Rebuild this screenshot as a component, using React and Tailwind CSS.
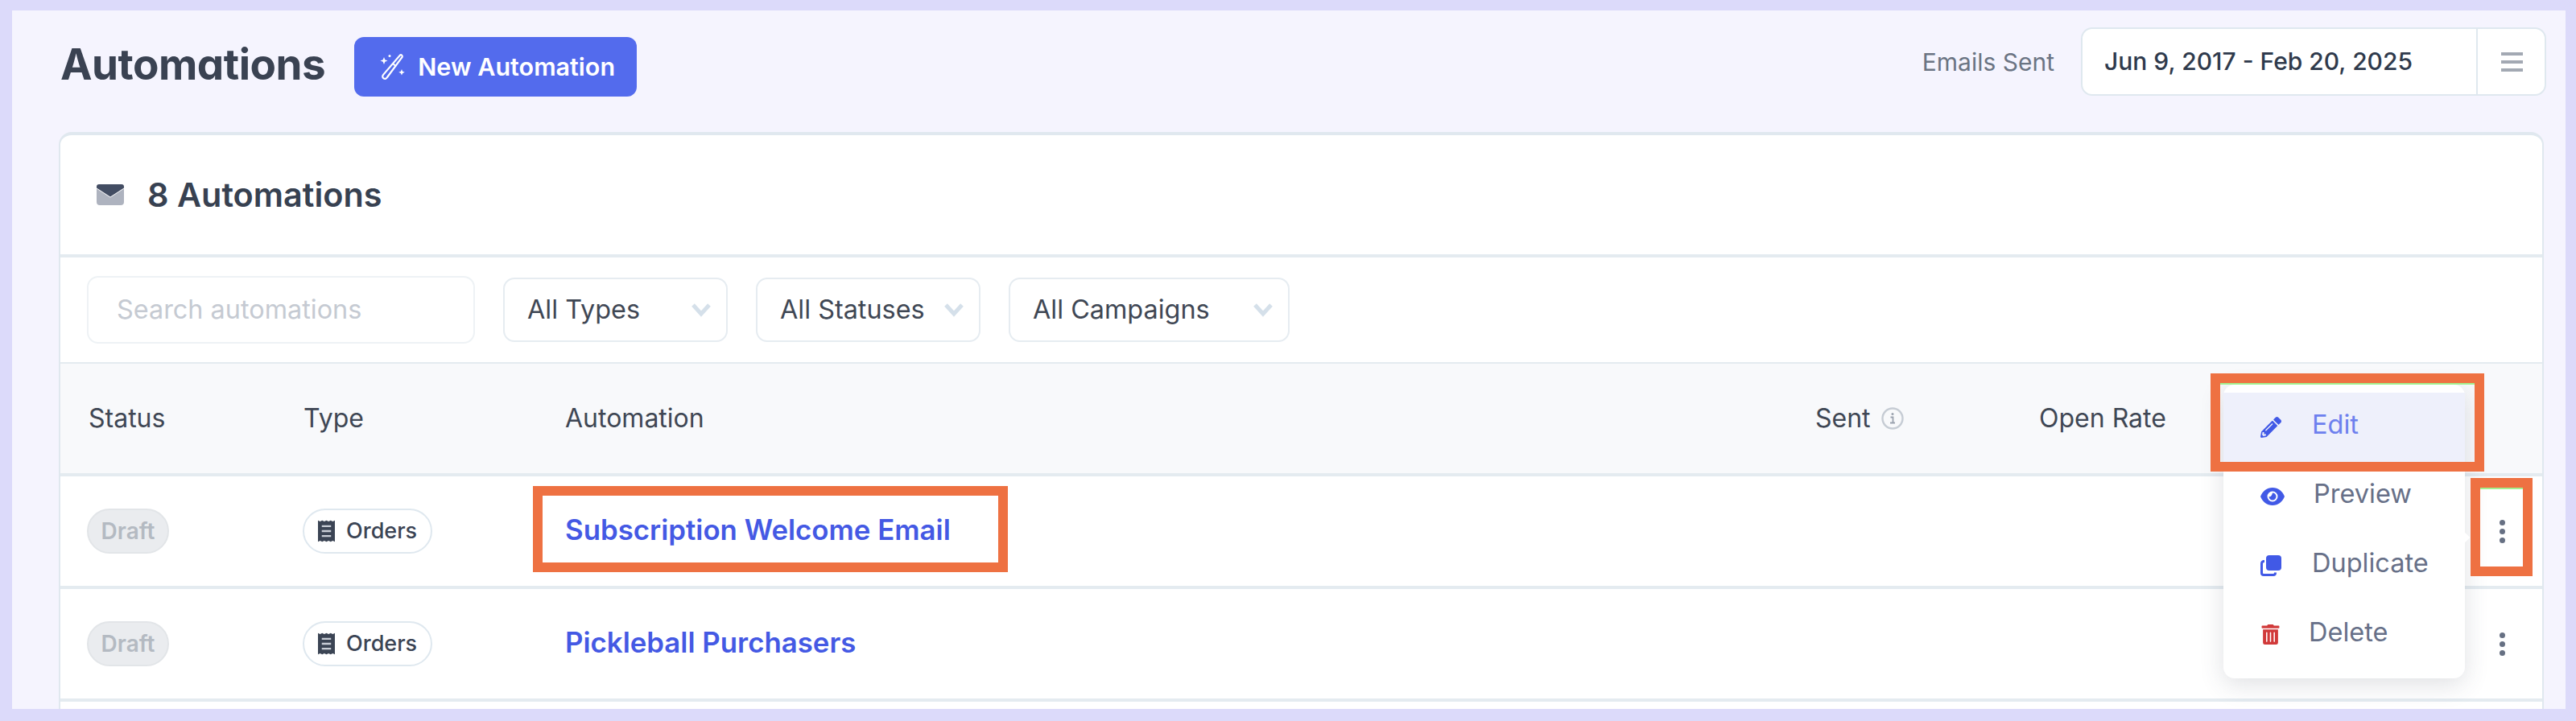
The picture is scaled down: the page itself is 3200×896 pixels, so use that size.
import React from 'react';
import { FaPencilAlt, FaTrashAlt } from 'react-icons/fa';

const WandIcon = () => (
    <svg width="34" height="34" viewBox="0 0 34 34" fill="none" className="shrink-0">
        <path d="M27 2.500c1.500-1 3.500 .8 2.600 2.400L11 30c-1.300 2-3 2.500-4.500 1.400s-1.700-2.800-.4-4.500L27 2.500z" stroke="#fff" strokeWidth="2.200" />
        <path d="M18 13l4 3.500" stroke="#fff" strokeWidth="2" />
        <path d="M7 5l1.300 3.200L11.500 9.500 8.300 10.800 7 14 5.700 10.800 2.500 9.500 5.700 8.200z" fill="#fff" />
        <path d="M29 20l1.100 2.700 2.700 1.100-2.700 1.100L29 27.600l-1.100-2.700-2.700-1.100 2.700-1.100z" fill="#fff" />
        <circle cx="14" cy="3.500" r="1.500" fill="#fff" />
    </svg>
);

const MailIcon = () => (
    <svg width="34" height="26" viewBox="0 0 34 26" className="shrink-0">
        <path d="M0 5.500l17 11 17-11V22a4 4 0 0 1-4 4H4a4 4 0 0 1-4-4z" fill="#aeb3bf" />
        <path d="M3 0h28a3 3 0 0 1 3 3v1.500L17 15.500 0 4.500V3a3 3 0 0 1 3-3z" fill="#434d63" />
    </svg>
);

const ReceiptIcon = () => (
    <svg width="21" height="28" viewBox="0 0 22 28" className="shrink-0">
        <path d="M0 0l2.750 1.500L5.500 0l2.750 1.500L11 0l2.750 1.500L16.500 0l2.750 1.500L22 0v28l-2.750-1.500L16.500 28l-2.750-1.500L11 28l-2.750-1.500L5.500 28l-2.750-1.500L0 28z" fill="#3b4454" />
        <path d="M5 7.500h12M5 14h12M5 20.500h12" stroke="#c9ced6" strokeWidth="2.400" />
    </svg>
);

const EyeIcon = () => (
    <svg width="30" height="22" viewBox="0 0 30 22" className="shrink-0">
        <path d="M15 0c7 0 12.500 4.500 15 11-2.500 6.500-8 11-15 11S2.500 17.500 0 11C2.500 4.500 8 0 15 0z" fill="#4159e6" />
        <circle cx="15" cy="11" r="6.500" fill="#fff" />
        <path d="M15 6.500a4.500 4.500 0 1 1-4.500 4.500c1.800 .8 3.800-.6 4.500-4.500z" fill="#4159e6" />
    </svg>
);

const DuplicateIcon = () => (
    <svg width="26" height="26" viewBox="0 0 26 26" className="shrink-0">
        <rect x="7" y="0" width="19" height="19" rx="4" fill="#4159e6" />
        <path d="M5 7.500H4A3 3 0 0 0 1.500 10.500V22A2.500 2.500 0 0 0 4 24.500h12A2.500 2.500 0 0 0 18.500 22v-.5" fill="none" stroke="#4159e6" strokeWidth="3" />
    </svg>
);

const InfoIcon = () => (
    <svg width="28" height="28" viewBox="0 0 28 28" fill="none" className="shrink-0">
        <circle cx="14" cy="14" r="12.500" stroke="#c6ccd4" strokeWidth="2.400" />
        <path d="M11.500 12.500h3v6.500M11 19.500h6" stroke="#9aa2ae" strokeWidth="1.800" />
        <circle cx="14" cy="8.500" r="1.500" fill="#9aa2ae" />
    </svg>
);

const Chevron = () => (
    <svg width="26" height="18" viewBox="0 0 26 18" fill="none" className="shrink-0">
        <path d="M3 3l10 11L23 3" stroke="#d5e0ea" strokeWidth="5" />
    </svg>
);

const Dots = () => (
    <div className="flex flex-col gap-[4px] items-center w-[8px]">
        <span className="w-[7px] h-[7px] rounded-full bg-[#667083]" />
        <span className="w-[7px] h-[7px] rounded-full bg-[#667083]" />
        <span className="w-[7px] h-[7px] rounded-full bg-[#667083]" />
    </div>
);

const FilterSelect = ({ label, className }) => (
    <div className={`flex items-center justify-between h-[80px] pl-[28px] pr-[18px] bg-white border-2 border-[#e6ecf1] rounded-[14px] text-[32.400px] text-[#3f4754] ${className}`}>
        <span>{label}</span>
        <Chevron />
    </div>
);

const Row = ({ name }) => (
    <div className="relative flex items-center h-[140px] shrink-0 bg-white border-b-4 border-[#e4ebf0]">
        <div className="w-[301px] pl-[33px] shrink-0">
            <span className="inline-flex items-center justify-center w-[102px] h-[56px] rounded-full bg-[#eaecef] border-2 border-[#e2e5e8] text-[28px] font-semibold text-[#b4bac2]">Draft</span>
        </div>
        <div className="w-[326px] shrink-0">
            <span className="inline-flex items-center gap-[14px] w-[161px] h-[56px] pl-[17px] rounded-full bg-white border-2 border-[#dfe8ef] text-[27px] font-medium text-[#3b4454]">
                <ReceiptIcon />
                Orders
            </span>
        </div>
        <a className="-mt-[3px] text-[34.800px] font-semibold text-[#4459e4]">{name}</a>
        <div className="ml-auto mr-[46px]">
            <Dots />
        </div>
    </div>
);

const MenuItem = ({ icon, label, className, iconClassName }) => (
    <div className={`flex items-center h-[86px] pl-[46px] pb-[5px] text-[32.500px] ${className}`}>
        <div className={`shrink-0 flex items-center mt-[4px] ${iconClassName}`}>{icon}</div>
        {label}
    </div>
);

const App = () => {
    return (
        <div className="relative w-[3200px] h-[896px] overflow-hidden bg-[#dcdafa] pt-[13px] px-[13px] pb-[15px] font-['Inter','Noto_Sans',sans-serif]">
            <div className="h-[868px] w-[3172px] ml-[2px] bg-[#f5f4fe] flex flex-col overflow-hidden">
                <div className="flex items-start shrink-0 h-[151px] pl-[60px] pr-[24px]">
                    <h1 className="mt-[28px] mr-[36px] text-[53px] font-bold text-[#3a4252] tracking-[-0.5px] [font-feature-settings:'cv11']">Automations</h1>
                    <button className="mt-[33px] flex items-center gap-[15px] h-[74px] w-[351px] pl-[30px] rounded-[12px] bg-[#536bed] text-[30.500px] font-semibold text-white">
                        <WandIcon />
                        New Automation
                    </button>
                    <span className="mt-[42px] ml-auto mr-[33px] text-[30px] text-[#6b7483]">Emails Sent</span>
                    <div className="mt-[21px] flex items-stretch h-[85px] w-[578px] bg-white border-2 border-[#dfe8ef] rounded-[14px]">
                        <div className="flex items-center flex-1 pl-[27px] text-[30px] font-medium text-[#2f3a4c] border-r-2 border-[#dfe8ef]">Jun 9, 2017 - Feb 20, 2025</div>
                        <div className="flex flex-col justify-center gap-[6px] w-[83px] pl-[29px]">
                            <span className="w-[27px] h-[4px] bg-[#a3a9b3]" />
                            <span className="w-[27px] h-[4px] bg-[#a3a9b3]" />
                            <span className="w-[27px] h-[4px] bg-[#a3a9b3]" />
                        </div>
                    </div>
                </div>

                <div className="flex flex-col flex-1 ml-[58px] mr-[27px] bg-white border-x-2 border-t-4 border-[#e0e8ef] rounded-t-[16px] overflow-hidden">
                    <div className="flex items-center gap-[29px] h-[152px] shrink-0 pl-[45px] border-b-4 border-[#e4ebf0]">
                        <MailIcon />
                        <h2 className="text-[41.400px] font-semibold text-[#374151]">8 Automations</h2>
                    </div>

                    <div className="flex items-center h-[132px] shrink-0 pl-[33px] border-b-2 border-[#e4ebf0]">
                        <div className="flex items-center w-[482px] h-[84px] pl-[35px] bg-white border-2 border-[#eef2f5] rounded-[14px] text-[32.400px] text-[#c5cad2] mr-[35px]">Search automations</div>
                        <FilterSelect label="All Types" className="w-[279px] mr-[35px]" />
                        <FilterSelect label="All Statuses" className="w-[279px] mr-[35px]" />
                        <FilterSelect label="All Campaigns" className="w-[349px]" />
                    </div>

                    <div className="flex items-center h-[140px] shrink-0 bg-[#f8f9fb] border-b-4 border-[#e4ebf0] text-[32px] text-[#3f4754]">
                        <div className="w-[302px] pl-[35px] shrink-0">Status</div>
                        <div className="w-[325px] shrink-0">Type</div>
                        <div className="w-[1553px] shrink-0">Automation</div>
                        <div className="w-[278px] shrink-0 flex items-center gap-[13px]">
                            Sent
                            <InfoIcon />
                        </div>
                        <div>Open Rate</div>
                    </div>

                    <Row name="Subscription Welcome Email" />
                    <Row name="Pickleball Purchasers" />
                </div>
            </div>

            {/* dropdown opened from the first row */}
            <div className="absolute left-[2762px] top-[478px] w-[300px] h-[365px] pt-[10px] bg-white rounded-[14px] shadow-[0_8px_30px_rgba(60,70,90,0.16)]">
                <div className="absolute -right-[3px] top-[182px] w-[16px] h-[16px] rotate-45 bg-white" />
                <MenuItem icon={<FaPencilAlt size={26} />} label="Edit" className="bg-[#eef0fb] text-[#6d80ee]" iconClassName="w-[64px] text-[#4159e6]" />
                <MenuItem icon={<EyeIcon />} label="Preview" className="text-[#677088]" iconClassName="w-[66px]" />
                <MenuItem icon={<DuplicateIcon />} label="Duplicate" className="text-[#677088]" iconClassName="w-[64px]" />
                <MenuItem icon={<FaTrashAlt size={25} />} label="Delete" className="text-[#677088]" iconClassName="w-[60px] text-[#d13a3a]" />
            </div>

            {/* orange annotations */}
            <div className="absolute left-[662px] top-[604px] w-[590px] h-[107px] border-[12px] border-[#ee7142]" />
            <div className="absolute left-[2746px] top-[464px] w-[340px] h-[122px] border-[12px] border-[#ee7142]">
                <div className="h-[2px] bg-[#a3f08f]" />
            </div>
            <div className="absolute left-[3069px] top-[594px] w-[77px] h-[122px] border-[12px] border-[#ee7142]">
                <div className="h-[2px] bg-[#a3f08f]" />
            </div>
        </div>
    );
};

export default App;
